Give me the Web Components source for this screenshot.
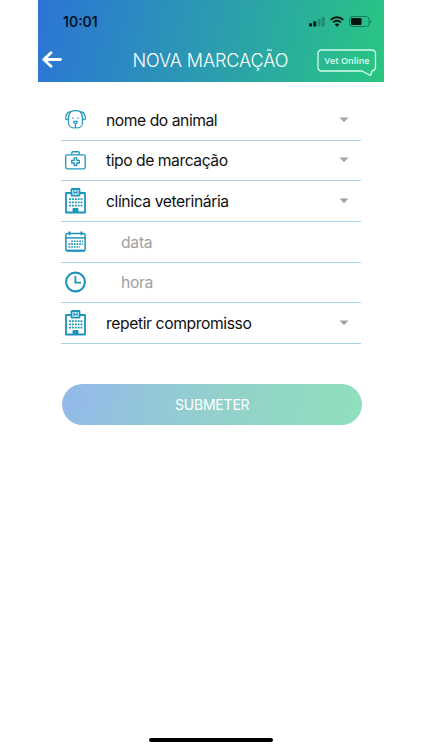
<!DOCTYPE html>
<html lang="pt">
<head>
<meta charset="utf-8">
<title>Nova Marcação</title>
<style>
html,body{margin:0;height:100%;background:#fff;overflow:hidden}
body{font-family:Inter,"Liberation Sans",sans-serif}
</style>
</head>
<body>
<vet-screen>
  <app-header slot="header" heading="NOVA MARCAÇÃO" time="10:01"></app-header>
  <form-row icon="dog" label="nome do animal" ls="-.46px" select></form-row>
  <form-row icon="kit" label="tipo de marcação" ls="-.46px" select></form-row>
  <form-row icon="clinic" label="clínica veterinária" ls="-.41px" select></form-row>
  <form-row icon="calendar" label="data" ls="-.25px" hint></form-row>
  <form-row icon="clock" label="hora" ls="-.4px" hint></form-row>
  <form-row icon="clinic" label="repetir compromisso" ls="-.4px" select></form-row>
  <submit-button slot="action">SUBMETER</submit-button>
</vet-screen>
<script>
const define = (name, render) => customElements.define(name, class extends HTMLElement {
  connectedCallback() {
    if (!this.shadowRoot) this.attachShadow({mode: 'open'}).innerHTML = render(this);
  }
});

const icons = {
  dog: `<svg width="21" height="19" viewBox="0 0 21 19" fill="none" stroke="#2396bd" stroke-width="1.2" stroke-linecap="round" stroke-linejoin="round">
    <path d="M5.500 2C7 .9 8.800.7 10.500.7S14 .9 15.500 2C17 3.600 17.500 6 17.500 9v3.500c0 3.200-2 5.500-5 5.500-.8 0-1.300-.4-2-.4s-1.200.4-2 .4c-3 0-5-2.300-5-5.500V9c0-3 .5-5.400 2-7z"/>
    <path d="M5.500 1.900C3.500 1.400 2 2.900 1.300 5 .7 6.700.1 8.600 1 9.400c.8.600 1.700.1 2.500-1.200M15.500 1.900c2-.5 3.500 1 4.200 3.100.6 1.700 1.200 3.600.3 4.400-.8.600-1.700.1-2.500-1.200"/>
    <path d="M8.900 11.300h3.200c.4 1.200-.6 2.400-1.600 2.400s-2-1.200-1.600-2.400zM10.500 13.700v3.500"/>
    <path d="M7.900 8v.2M13.100 8v.2" stroke-width="1.400"/></svg>`,
  kit: `<svg width="21" height="19" viewBox="0 0 21 19" fill="none" stroke="#2396bd" stroke-width="1.350" stroke-linejoin="round">
    <rect x=".7" y="3.800" width="19.500" height="14" rx="1.700"/><path d="M6.800 3.600V1.700c0-.6.4-1 1-1h5.400c.6 0 1 .4 1 1v1.900"/>
    <path d="M9.200 6.900h2.600v2.500h2.500V12h-2.500v2.500H9.200V12H6.700V9.400h2.500z"/></svg>`,
  clinic: `<svg width="21" height="26" viewBox="0 0 21 26" fill="none" stroke="#1c93bb" stroke-width="1.800" stroke-linejoin="round">
    <path d="M6.500 5H1v19.500h19V5h-5.500"/><rect x="6.500" y="1" width="8" height="6.700" rx=".5"/>
    <path d="M9 2.300v4M12 2.300v4M9 4.300h3" stroke-width="1.300"/>
    <path d="M4.200 11.200h13.300M4.200 14.400h13.300M4.200 17.600h13.300" stroke-width="1.700" stroke-dasharray="1.800 1.050"/>
    <path d="M8 24.500v-4h5v4z" fill="#1c93bb" stroke-width="1"/></svg>`,
  calendar: `<svg width="21" height="21" viewBox="0 0 21 21" fill="none" stroke="#1c93bb" stroke-width="1.500">
    <rect x=".9" y="2.400" width="19.200" height="17.500" rx="1.600"/><path d="M1 6.900h19"/><path d="M1 19.500h19" stroke-width="1.800"/>
    <path d="M4.500.4v3.800M16.500.4v3.800" stroke-width="2"/>
    <path d="M6.200 10.200h11.700M3.500 13.100h14.400M3.500 16h11.500" stroke-width="1.600" stroke-dasharray="1.700 1"/></svg>`,
  clock: `<svg width="21" height="22" viewBox="0 0 21 22" fill="none" stroke="#1c93bb" stroke-width="2.100">
    <circle cx="10.500" cy="11" r="9.400"/><path d="M10.400 5v6.700h5.700" stroke-width="1.800"/></svg>`
};

define('vet-screen', () => `<style>
  :host{display:flex;flex-direction:column;box-sizing:border-box;width:345.500px;height:750px;margin-left:38px;background:#fff}
  main{margin:18.500px 22.500px 0 22.500px;flex:1}
  .fields{display:block}
  .action{margin-top:40.300px;padding:0 0 0 1.700px;width:300px}
  footer{display:flex;justify-content:center;padding-bottom:8px}
  footer i{width:124px;height:4.500px;border-radius:3px;background:#000}
  </style>
  <slot name="header"></slot>
  <main><div class="fields"><slot></slot></div><div class="action"><slot name="action"></slot></div></main>
  <footer><i></i></footer>`);

define('app-header', el => `<style>
  :host{display:block;height:81.500px;background:linear-gradient(102deg,#2c74d6 0%,#2b9cb0 50%,#29c583 98%);color:#fff}
  .status{display:flex;justify-content:space-between;height:43px;box-sizing:border-box;padding:14px 12px 0 25px;color:#06142b}
  time{font-size:14px;font-weight:600;line-height:16px;letter-spacing:0}
  .marks{display:flex;gap:5px;padding-top:1px}
  .bar{display:flex;align-items:flex-start;height:38px}
  .back{margin:8px 0 0 4px}
  h1{margin:5.500px 0 0 69.500px;width:157px;font-size:18px;line-height:24px;font-weight:300;letter-spacing:-.1px;white-space:nowrap}
  vet-badge{margin:6px 0 0 27px}
  </style>
  <div class="status"><time>${el.getAttribute('time')}</time><div class="marks">
    <svg width="16" height="14" viewBox="0 0 16 14"><g fill="#071a18"><rect y="8.200" width="3" height="3.300" rx=".7"/><rect x="4.200" y="6.300" width="3" height="5.200" rx=".7"/></g><g fill="#16775f" opacity=".65"><rect x="8.500" y="4" width="3" height="7.500" rx=".7"/><rect x="12.700" y="1.700" width="3" height="9.800" rx=".7"/></g></svg>
    <svg width="14" height="14" viewBox="0 0 14 14" fill="none" stroke="#04140f" stroke-width="2"><path d="M.8 4.900C4.300 1.300 9.700 1.300 13.200 4.900M3.200 7.400c2.200-2.200 5.400-2.200 7.600 0"/><path d="M7 11.700 4.700 9.400c1.400-1.200 3.200-1.200 4.600 0z" fill="#04140f" stroke="none"/></svg>
    <svg width="23" height="14" viewBox="0 0 23 14"><rect x=".5" y="1.500" width="19.500" height="10" rx="2.600" fill="none" stroke="#167d58"/><rect x="2" y="3" width="10.500" height="7" rx="1.200" fill="#04140f"/><path d="M21.300 4.700c1.400.4 1.400 3.200 0 3.600z" fill="#167d58"/></svg>
  </div></div>
  <div class="bar">
    <svg class="back" width="21" height="18" viewBox="0 0 21 18" fill="none" stroke="#fff" stroke-width="2.900" stroke-linecap="round" stroke-linejoin="round"><path d="M9 1.700 1.800 8.500 9 15.200M2 8.500h16.500"/></svg>
    <h1>${el.getAttribute('heading')}</h1><vet-badge>Vet Online</vet-badge>
  </div>`);

define('vet-badge', () => `<style>
  :host{display:grid;width:60px;height:28px;color:#ddfff0;font:600 9px/23px "Open Sans","Noto Sans",sans-serif;letter-spacing:-.05px}
  svg,span{grid-area:1/1}
  span{text-align:center;white-space:nowrap;padding-left:1px}
  </style><svg width="60" height="28" viewBox="0 0 60 28" fill="none" stroke="#d4faec" stroke-width="1.300" stroke-linejoin="round"><path d="M4.500 1h50.500a3.500 3.500 0 0 1 3.500 3.500v14c0 2-1.300 3-3.500 3.500l-1.500 4.500-8.500-4.500H4.500A3.500 3.500 0 0 1 1 18.500v-14A3.500 3.500 0 0 1 4.500 1z"/></svg><span><slot></slot></span>`);

define('form-row', el => `<style>
  :host{display:grid;grid-template-columns:30px 1fr 22px;align-items:center;box-sizing:border-box;height:40.650px;border-bottom:1px solid #a9d3e6}
  .icon{display:flex;justify-content:center}
  .label{padding:1.600px 0 0 ${el.hasAttribute('hint') ? 30.5 : 15.5}px;font-size:15.700px;line-height:20px;white-space:nowrap;color:${el.hasAttribute('hint') ? '#a0a0a0' : '#111'};letter-spacing:${el.getAttribute('ls')}}
  </style><span class="icon">${icons[el.getAttribute('icon')]}</span><span class="label">${el.getAttribute('label')}</span>
  ${el.hasAttribute('select') ? '<svg width="10" height="6" viewBox="0 0 10 6"><path d="M.5.500h9L5 5.300z" fill="#a3a3a3"/></svg>' : ''}`);

define('submit-button', () => `<style>
  :host{display:block}
  button{display:block;width:300px;height:41px;border:0;border-radius:21px;padding:1px 0 0;background:linear-gradient(98deg,#93bae9 2%,#93d0cd 50%,#90dfbc 98%);color:#fff;font:400 14px/20px Inter,sans-serif;letter-spacing:-.2px}
  </style><button><slot></slot></button>`);
</script>
</body>
</html>
